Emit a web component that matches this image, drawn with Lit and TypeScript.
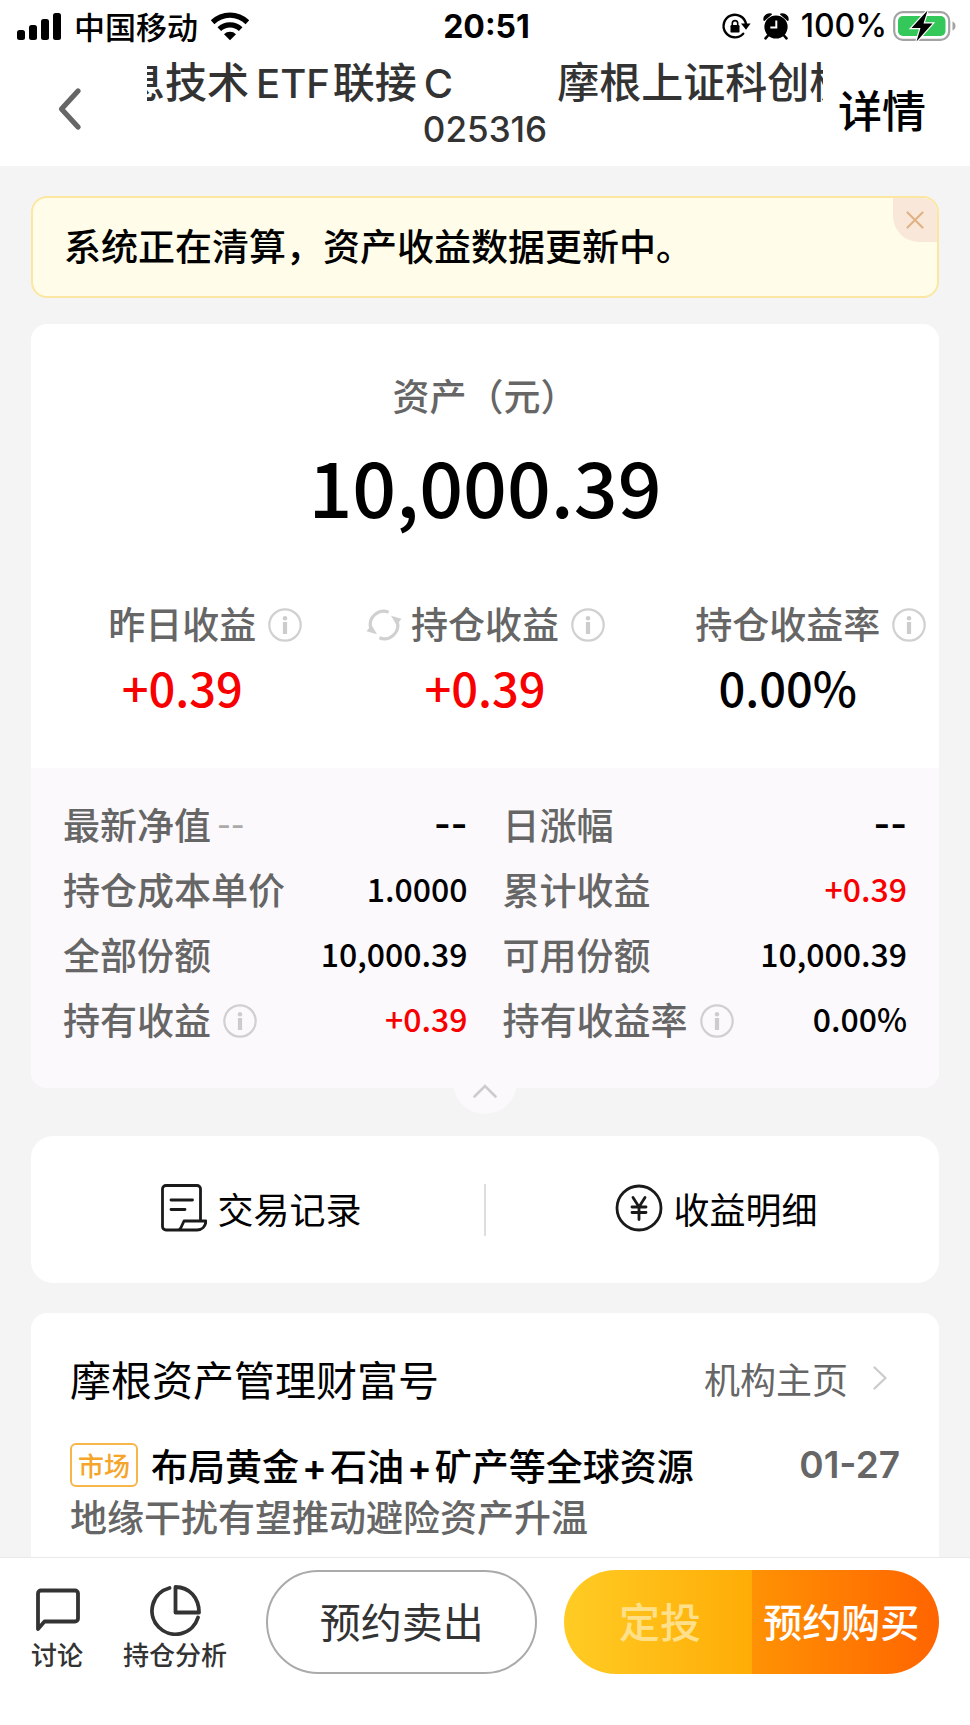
import { LitElement, html, svg, css, nothing } from "lit";
import { customElement, property } from "lit/decorators.js";

type Tone = "plain" | "gain" | "empty";

interface Detail {
  label: string;
  value: string;
  tone?: Tone;
  note?: string;
  info?: boolean;
}

const DETAILS: Detail[] = [
  { label: "最新净值", value: "--", tone: "empty", note: "--" },
  { label: "日涨幅", value: "--", tone: "empty" },
  { label: "持仓成本单价", value: "1.0000" },
  { label: "累计收益", value: "+0.39", tone: "gain" },
  { label: "全部份额", value: "10,000.39" },
  { label: "可用份额", value: "10,000.39" },
  { label: "持有收益", value: "+0.39", tone: "gain", info: true },
  { label: "持有收益率", value: "0.00%", info: true },
];

const icon = (size: [number, number], body: unknown) => html`<svg
  width=${size[0]}
  height=${size[1]}
  viewBox="0 0 ${size[0]} ${size[1]}"
  fill="none"
  aria-hidden="true"
>
  ${body}
</svg>`;

const signalIcon = icon([46, 30], svg`
  <rect x="1" y="19" width="8" height="10" rx="2.5" fill="#000"/>
  <rect x="13" y="14" width="8" height="15" rx="2.5" fill="#000"/>
  <rect x="25" y="8" width="8" height="21" rx="2.5" fill="#000"/>
  <rect x="37" y="2" width="8" height="27" rx="2.5" fill="#000"/>`);

const wifiIcon = icon([40, 30], svg`
  <path d="M0.8 9.2a27.6 27.6 0 0 1 38.4 0l-3.6 4a22.4 22.4 0 0 0-31.2 0z" fill="#000"/>
  <path d="M7.5 16.2a18 18 0 0 1 25 0l-3.6 3.8a12.8 12.8 0 0 0-17.8 0z" fill="#000"/>
  <path d="M14 23.2a8.6 8.6 0 0 1 12 0l-6 6z" fill="#000"/>`);

const lockIcon = icon([30, 28], svg`
  <path d="M22.2 21.7A11.3 11.3 0 1 1 25 12" stroke="#000" stroke-width="2.4" stroke-linecap="round"/>
  <path d="M20 11.5h9.6l-4.6 6.3z" fill="#000"/>
  <rect x="9.5" y="13" width="9" height="7.6" rx="1.2" fill="#000"/>
  <path d="M11.3 13.5v-2.2a2.7 2.7 0 0 1 5.4 0v2.2" stroke="#000" stroke-width="1.6"/>`);

const alarmIcon = icon([26, 28], svg`
  <circle cx="13" cy="15" r="11.6" fill="#000"/>
  <path d="M1.2 8.2C0.2 5 3.8 1 8.2 2.2zM24.8 8.2C25.8 5 22.2 1 17.8 2.2z" fill="#000" stroke="#000" stroke-width="1.4" stroke-linejoin="round"/>
  <path d="M5.5 23l-3 3.3M20.5 23l3 3.3" stroke="#000" stroke-width="2.6" stroke-linecap="round"/>
  <path d="M13.3 8.5v7h-6" stroke="#fff" stroke-width="2"/>`);

const batteryIcon = icon([64, 32], svg`
  <rect x="1.2" y="2.2" width="55" height="27.6" rx="8.5" stroke="#a3a3a3" stroke-width="2.2"/>
  <rect x="5" y="6" width="47.5" height="20" rx="5" fill="#34c759"/>
  <path d="M59.5 11.5c4 1.5 4 7.5 0 9z" fill="#a3a3a3"/>
  <path d="M34.5 0.5L18.5 18h9l-4 13.5L39.5 13.5h-9z" fill="#000" stroke="#fff" stroke-width="2.4" paint-order="stroke"/>`);

const backIcon = icon([30, 46], svg`
  <path d="M23 5L6.5 23L23 41" stroke="#666" stroke-width="5.2" stroke-linecap="round" stroke-linejoin="round"/>`);

const closeIcon = icon([20, 20], svg`
  <path d="M2.5 2.5l15 15M17.5 2.5l-15 15" stroke="#e0b387" stroke-width="2.2" stroke-linecap="round"/>`);

const infoIcon = icon([34, 34], svg`
  <circle cx="17" cy="17" r="15.7" stroke="#d0d0d0" stroke-width="2.2"/>
  <circle cx="17" cy="10.2" r="2.2" fill="#ccc"/>
  <path d="M17 14v12" stroke="#ccc" stroke-width="4.2"/>`);

const refreshIcon = icon([36, 36], svg`
  <path d="M4.6 21a13.5 13.5 0 0 1 18-15.8" stroke="#d0d0d0" stroke-width="3.2"/>
  <path d="M31.4 15a13.5 13.5 0 0 1-18 15.8" stroke="#d0d0d0" stroke-width="3.2"/>
  <path d="M0.5 24.2l5-6.2 5.5 9.2z" fill="#d0d0d0"/>
  <path d="M35.5 11.8l-5 6.2-5.5-9.2z" fill="#d0d0d0"/>`);

const foldIcon = icon([26, 16], svg`
  <path d="M2.5 13.5L13 3l10.5 10.5" stroke="#ccc" stroke-width="2.6" stroke-linecap="round"/>`);

const recordIcon = icon([46, 48], svg`
  <path d="M39.5 37V5a3.5 3.5 0 0 0-3.5-3.5H5A3.5 3.5 0 0 0 1.5 5v37.5A3.5 3.5 0 0 0 5 46h31c5 0 8.5-3.5 9-9H23l-3 6.5c-.7 1.6-1.6 2.5-3.5 2.5" stroke="#1a1a1a" stroke-width="2.8" stroke-linejoin="round"/>
  <path d="M10 16h21.5M10 25.5h14" stroke="#1a1a1a" stroke-width="2.8" stroke-linecap="round"/>`);

const yenIcon = icon([48, 48], svg`
  <circle cx="24" cy="24" r="22" stroke="#1a1a1a" stroke-width="2.8"/>
  <path d="M18 13.5L24 23l6-9.5M24 23v12.5M17 23h14M17 28.5h14" stroke="#1a1a1a" stroke-width="2.8" stroke-linecap="round"/>`);

const moreIcon = icon([16, 26], svg`
  <path d="M2.5 2.5L13.5 13l-11 10.5" stroke="#ccc" stroke-width="2.4" stroke-linecap="round" stroke-linejoin="round"/>`);

const talkIcon = icon([52, 52], svg`
  <path d="M7 45V9.5A3 3 0 0 1 10 6.5h34a3 3 0 0 1 3 3v25a3 3 0 0 1-3 3H13.5z" stroke="#333" stroke-width="3.8" stroke-linejoin="round"/>`);

const pieIcon = icon([52, 52], svg`
  <path d="M20.5 4A23.5 23.5 0 1 0 49 33.5" stroke="#333" stroke-width="3.8" stroke-linecap="round"/>
  <path d="M26.5 3v25.5H50C50 14 40.5 3 26.5 3z" stroke="#333" stroke-width="3.8" stroke-linejoin="round"/>`);

const base = css`
  :host {
    --latin: Inter, sans-serif;
    box-sizing: border-box;
    font-family: "Noto Sans CJK SC", sans-serif;
  }
  *,
  *::before,
  *::after {
    box-sizing: border-box;
  }
  svg {
    display: block;
    flex: none;
  }
  button {
    font: inherit;
    color: inherit;
    background: none;
    border: 0;
    padding: 0;
    margin: 0;
    cursor: pointer;
  }
  a {
    color: inherit;
    text-decoration: none;
  }
  p,
  h2,
  dl,
  dd {
    margin: 0;
  }
`;

@customElement("profit-stat")
export class ProfitStat extends LitElement {
  @property() label = "";
  @property() value = "";
  @property() tone: Tone = "plain";
  @property({ type: Boolean }) refreshable = false;

  static styles = [
    base,
    css`
      :host {
        display: flex;
        flex-direction: column;
        gap: 8px;
        text-align: center;
      }
      .head {
        display: grid;
        grid-template-columns: minmax(0, 1fr) auto minmax(0, 1fr);
        align-items: center;
      }
      .label {
        grid-column: 2;
        font-size: 37px;
        line-height: 50px;
        font-weight: 500;
        color: #666;
        white-space: nowrap;
      }
      .lead {
        grid-column: 1;
        justify-self: end;
        padding: 4px 9px 0 0;
      }
      .info {
        grid-column: 3;
        justify-self: start;
        padding: 4px 0 0 12px;
      }
      .value {
        font-size: 47px;
        line-height: 62px;
        font-weight: 500;
        color: #000;
      }
      .gain {
        color: #f90000;
      }
    `,
  ];

  render() {
    return html`
      <div class="head">
        ${this.refreshable
          ? html`<button class="lead" aria-label="刷新">${refreshIcon}</button>`
          : nothing}
        <span class="label">${this.label}</span>
        <button class="info" aria-label="说明">${infoIcon}</button>
      </div>
      <div class="value ${this.tone}">${this.value}</div>
    `;
  }
}

@customElement("status-bar")
export class StatusBar extends LitElement {
  static styles = [
    base,
    css`
      :host {
        display: grid;
        grid-template-columns: 1fr auto 1fr;
        align-items: center;
        height: 52px;
        padding: 0 13px 0 16px;
        font-size: 32px;
        line-height: 40px;
        color: #000;
        background: #fff;
      }
      .side {
        display: flex;
        align-items: center;
        gap: 12px;
      }
      .right {
        justify-content: flex-end;
        font-weight: 500;
        font-family: var(--latin);
      }
      .carrier {
        font-size: 31px;
        font-weight: 500;
      }
      .time {
        padding-top: 2px;
        font-family: var(--latin);
        font-weight: 700;
      }
      .battery {
        display: flex;
        align-items: center;
        gap: 6px;
      }
    `,
  ];

  render() {
    return html`
      <div class="side">
        ${signalIcon}<span class="carrier">中国移动</span>${wifiIcon}
      </div>
      <span class="time">20:51</span>
      <div class="side right">
        ${lockIcon}${alarmIcon}
        <span class="battery">100%${batteryIcon}</span>
      </div>
    `;
  }
}

@customElement("app-root")
export class AppRoot extends LitElement {
  static styles = [
    base,
    css`
      :host {
        display: flex;
        flex-direction: column;
        min-height: 100vh;
        background: #f4f4f4;
        color: #000;
      }
      .header {
        display: grid;
        grid-template-columns: 147px minmax(0, 1fr) 147px;
        align-items: center;
        height: 114px;
        background: #fff;
      }
      .back {
        justify-self: start;
        margin-left: 55px;
      }
      .more {
        justify-self: start;
        margin-left: 15px;
        font-size: 44px;
        line-height: 56px;
        font-weight: 500;
      }
      .heading {
        display: flex;
        flex-direction: column;
        align-self: start;
        padding-top: 2px;
        color: #333;
        font-weight: 500;
        text-align: center;
        overflow: hidden;
      }
      .marquee {
        display: flex;
        gap: 101px;
        margin-left: -24px;
        font-size: 42px;
        line-height: 52px;
        white-space: nowrap;
      }
      .latin {
        font-family: var(--latin);
        font-size: 40px;
        line-height: 40px;
        margin: 0 3px 0 7px;
      }
      .code {
        font-family: var(--latin);
        font-size: 35px;
        line-height: 46px;
      }
      .content {
        flex: 1;
        display: flex;
        flex-direction: column;
        padding: 30px 31px 0;
      }
      .notice {
        display: flex;
        align-items: flex-start;
        justify-content: space-between;
        margin-bottom: 26px;
        border: 2px solid #fbe7a1;
        border-radius: 16px;
        background: #fffdea;
        overflow: hidden;
      }
      .notice p {
        padding: 21px 0 25px 31px;
        font-size: 37px;
        line-height: 52px;
        font-weight: 500;
      }
      .close {
        display: grid;
        place-items: center;
        width: 44px;
        height: 44px;
        border-bottom-left-radius: 26px;
        background: #f9e8da;
      }
      .card {
        background: #fff;
        border-radius: 16px;
      }
      .asset {
        position: relative;
        margin-bottom: 48px;
      }
      .total {
        padding-top: 45px;
        text-align: center;
      }
      .total h2 {
        font-size: 37px;
        line-height: 52px;
        font-weight: 500;
        color: #666;
      }
      .total p {
        padding: 14px 0 63px;
        font-size: 77px;
        line-height: 100px;
        font-weight: 500;
      }
      .stats {
        display: grid;
        grid-template-columns: repeat(3, minmax(0, 1fr));
        padding-bottom: 50px;
      }
      .details {
        display: grid;
        grid-template-columns: repeat(2, minmax(0, 1fr));
        column-gap: 35px;
        padding: 23px 32px 37px;
        border-radius: 0 0 16px 16px;
        background: #fbf9fb;
      }
      .row {
        display: flex;
        align-items: center;
        justify-content: space-between;
        height: 65px;
      }
      .row dt {
        display: flex;
        align-items: center;
        gap: 12px;
        font-size: 37px;
        line-height: 52px;
        font-weight: 500;
        color: #666;
      }
      .row button {
        padding-top: 4px;
      }
      .note {
        margin-left: -6px;
        padding-top: 2px;
        font-family: var(--latin);
        font-size: 30px;
        color: #aaa;
      }
      .row dd {
        padding-bottom: 2px;
        font-size: 32px;
        line-height: 52px;
        font-weight: 500;
      }
      .row .gain {
        color: #f90000;
      }
      .row .empty {
        padding-bottom: 0;
        font-family: var(--latin);
        font-size: 36px;
        font-weight: 600;
      }
      .fold {
        position: absolute;
        left: 50%;
        bottom: -26px;
        display: grid;
        place-items: end center;
        width: 64px;
        height: 64px;
        margin-left: -32px;
        padding-bottom: 15px;
        border-radius: 50%;
        background: #fbf9fb;
      }
      .links {
        display: grid;
        grid-template-columns: 1fr 2px 1fr;
        align-items: center;
        height: 147px;
        margin-bottom: 30px;
        border-radius: 22px;
        font-size: 36px;
        line-height: 52px;
      }
      .links a {
        display: flex;
        align-items: center;
        justify-content: center;
        gap: 10px;
        padding: 0 0 4px 8px;
      }
      .rule {
        height: 52px;
        background: #ddd;
      }
      .news {
        flex: 1;
        padding: 38px 39px 0;
        border-radius: 16px 16px 0 0;
      }
      .line {
        display: flex;
        align-items: center;
        justify-content: space-between;
      }
      .line h2 {
        font-size: 41px;
        line-height: 54px;
        font-weight: 400;
      }
      .home {
        display: flex;
        align-items: center;
        gap: 24px;
        padding-right: 12px;
        font-size: 36px;
        line-height: 52px;
        color: #666;
      }
      .item {
        display: block;
        padding-top: 34px;
        font-size: 37px;
        line-height: 52px;
        font-weight: 500;
      }
      .story {
        display: flex;
        align-items: center;
        gap: 13px;
      }
      .tag {
        padding: 0 6px;
        border: 2px solid #f7b54a;
        border-radius: 6px;
        font-size: 26px;
        line-height: 40px;
        color: #f5a52a;
      }
      .plus {
        margin: 0 3px;
        font-family: var(--latin);
        font-weight: 600;
        line-height: 37px;
      }
      .date {
        font-family: var(--latin);
        font-size: 37px;
        font-weight: 600;
        color: #666;
      }
      .summary {
        line-height: 50px;
        color: #666;
      }
      .footer {
        display: flex;
        align-items: flex-start;
        gap: 27px;
        padding: 12px 31px 51px;
        border-top: 1px solid #e9e9e9;
        background: #fff;
      }
      .tabs {
        display: flex;
        gap: 40px;
        padding: 14px 12px 0 0;
      }
      .tab {
        display: flex;
        flex-direction: column;
        align-items: center;
        gap: 2px;
        font-size: 26px;
        line-height: 32px;
        font-weight: 500;
        color: #333;
        white-space: nowrap;
      }
      .sell,
      .buy {
        height: 104px;
        border-radius: 52px;
        font-size: 41px;
        white-space: nowrap;
      }
      .sell {
        flex: 269 1 0;
        padding-bottom: 4px;
        border: 2px solid #aaa;
        color: #333;
      }
      .buy {
        flex: 377 1 0;
        display: grid;
        grid-template-columns: 1fr 1fr;
        overflow: hidden;
      }
      .plan {
        padding: 0 0 4px 4px;
        color: #ffe08a;
        font-weight: 500;
        background: linear-gradient(90deg, #ffcc24, #ffac06);
      }
      .order {
        padding: 0 8px 4px 0;
        color: #fff;
        font-size: 39px;
        font-weight: 500;
        background: linear-gradient(90deg, #ff9204, #ff6400);
      }
    `,
  ];

  private renderDetail(d: Detail) {
    return html`<div class="row">
      <dt>
        ${d.label}
        ${d.note ? html`<span class="note">${d.note}</span>` : nothing}
        ${d.info
          ? html`<button aria-label="${d.label}说明">${infoIcon}</button>`
          : nothing}
      </dt>
      <dd class=${d.tone ?? "plain"}>${d.value}</dd>
    </div>`;
  }

  render() {
    return html`
      <status-bar></status-bar>
      <header class="header">
        <button class="back" aria-label="返回">${backIcon}</button>
        <div class="heading">
          <div class="marquee">
            <span>息技术<span class="latin">ETF</span>联接<span class="latin">C</span></span>
            <span>摩根上证科创板</span>
          </div>
          <span class="code">025316</span>
        </div>
        <button class="more">详情</button>
      </header>

      <main class="content">
        <div class="notice" role="status">
          <p>系统正在清算，资产收益数据更新中。</p>
          <button class="close" aria-label="关闭">${closeIcon}</button>
        </div>

        <section class="card asset">
          <div class="total">
            <h2>资产（元）</h2>
            <p>10,000.39</p>
          </div>
          <div class="stats">
            <profit-stat label="昨日收益" value="+0.39" tone="gain"></profit-stat>
            <profit-stat label="持仓收益" value="+0.39" tone="gain" refreshable></profit-stat>
            <profit-stat label="持仓收益率" value="0.00%"></profit-stat>
          </div>
          <dl class="details">${DETAILS.map((d) => this.renderDetail(d))}</dl>
          <button class="fold" aria-label="收起">${foldIcon}</button>
        </section>

        <nav class="card links">
          <a href="#records">${recordIcon}交易记录</a>
          <span class="rule"></span>
          <a href="#income">${yenIcon}收益明细</a>
        </nav>

        <section class="card news">
          <div class="line">
            <h2>摩根资产管理财富号</h2>
            <a class="home" href="#home">机构主页${moreIcon}</a>
          </div>
          <a class="item" href="#story">
            <div class="line">
              <span class="story"
                ><span class="tag">市场</span
                ><span
                  >布局黄金<span class="plus">+</span>石油<span class="plus">+</span>矿产等全球资源</span
                ></span
              >
              <span class="date">01-27</span>
            </div>
            <p class="summary">地缘干扰有望推动避险资产升温</p>
          </a>
        </section>
      </main>

      <footer class="footer">
        <div class="tabs">
          <button class="tab">${talkIcon}讨论</button>
          <button class="tab">${pieIcon}持仓分析</button>
        </div>
        <button class="sell">预约卖出</button>
        <div class="buy">
          <button class="plan">定投</button>
          <button class="order">预约购买</button>
        </div>
      </footer>
    `;
  }
}
